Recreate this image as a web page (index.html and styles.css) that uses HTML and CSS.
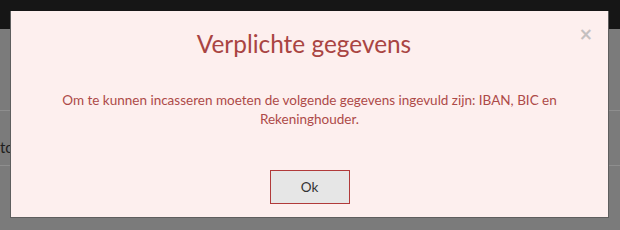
FILE: index.html
```html
<!DOCTYPE html>
<html lang="nl">
<head>
<meta charset="utf-8">
<title>Verplichte gegevens</title>
<link rel="stylesheet" href="styles.css">
</head>
<body>
<div class="page">
  <div class="topbar"></div>
  <div class="content">
    <div class="row"><span class="row-text">to</span></div>
  </div>
  <div class="modal">
    <button class="close" type="button" aria-label="Sluiten">&times;</button>
    <h2 class="modal-title">Verplichte gegevens</h2>
    <p class="modal-body">Om te kunnen incasseren moeten de volgende gegevens ingevuld zijn: IBAN, BIC en Rekeninghouder.</p>
    <div class="modal-footer">
      <button class="btn" type="button">Ok</button>
    </div>
  </div>
</div>
</body>
</html>
```
FILE: styles.css
```css
html, body {
  margin: 0;
  padding: 0;
}
body {
  font-family: "Lato", "Open Sans", sans-serif;
  background: #7b7b7b;
}
.page {
  position: relative;
  width: 620px;
  height: 230px;
  overflow: hidden;
  background: #7b7b7b;
}
.topbar {
  height: 29px;
  background: #161616;
}
.content {
  padding-top: 81px;
}
.row {
  height: 56px;
  box-sizing: border-box;
  padding-top: 28px;
  border-top: 1px solid #8e8e8e;
  border-bottom: 1px solid #8e8e8e;
  display: flex;
  align-items: flex-start;
}
.row-text {
  margin-left: 0;
  font-size: 15px;
  line-height: 17px;
  color: #1e1e1e;
}
.modal {
  position: absolute;
  left: 10px;
  top: 11px;
  width: 597px;
  height: 206px;
  background: #fdefee;
  border: 1px solid #5e5e5e;
  border-top: none;
  display: flex;
  flex-direction: column;
  align-items: center;
  color: #a94442;
}
.close {
  position: absolute;
  right: 15px;
  top: 15px;
  border: none;
  background: transparent;
  padding: 0;
  font-family: "DejaVu Sans", sans-serif;
  font-weight: bold;
  font-size: 17px;
  line-height: 17px;
  color: #c4c0c0;
}
.modal-title {
  margin: 18px 11px 0 0;
  font-size: 24.4px;
  font-weight: normal;
  line-height: 30px;
}
.modal-body {
  margin: 32px 0 0;
  width: 530px;
  text-align: center;
  font-size: 13.5px;
  line-height: 19px;
  color: #ad4a48;
}
.modal-footer {
  margin-top: 41px;
}
.btn {
  width: 80px;
  height: 34px;
  border: 1px solid #b13a3a;
  background: #e6e6e6;
  color: #333;
  font-family: "Lato", "Open Sans", sans-serif;
  font-size: 13.5px;
  padding: 0;
}
```
